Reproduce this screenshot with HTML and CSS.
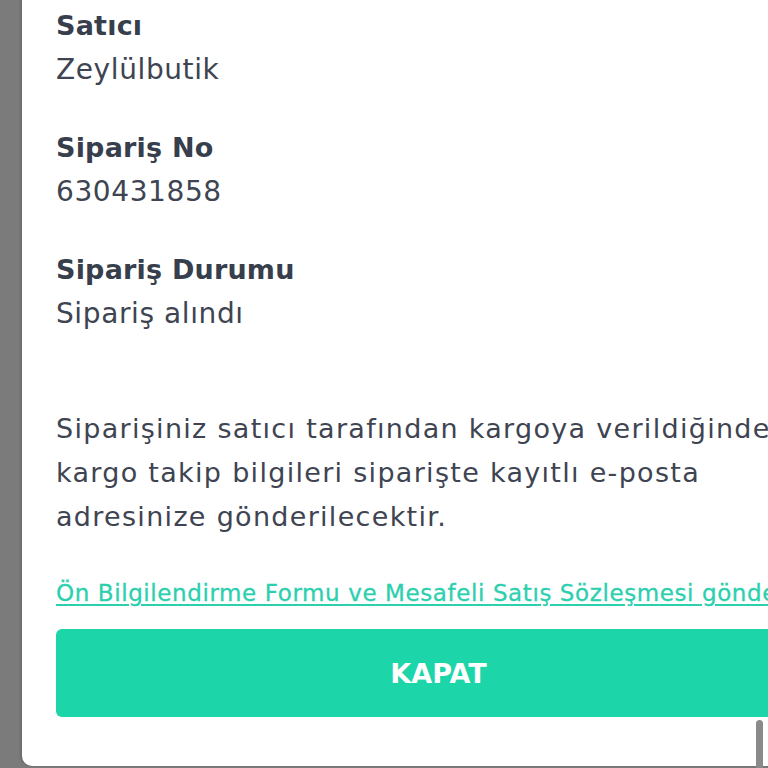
FILE: index.html
```html
<!DOCTYPE html>
<html lang="tr">
<head>
<meta charset="utf-8">
<title>Sipariş</title>
<link rel="stylesheet" href="styles.css">
</head>
<body>
<div class="panel">
  <div class="field">
    <div class="label">Satıcı</div>
    <div class="value">Zeylülbutik</div>
  </div>
  <div class="field">
    <div class="label">Sipariş No</div>
    <div class="value">630431858</div>
  </div>
  <div class="field">
    <div class="label">Sipariş Durumu</div>
    <div class="value">Sipariş alındı</div>
  </div>
  <p class="info">Siparişiniz satıcı tarafından kargoya verildiğinde kargo takip bilgileri siparişte kayıtlı e-posta adresinize gönderilecektir.</p>
  <a class="link" href="#">Ön Bilgilendirme Formu ve Mesafeli Satış Sözleşmesi gönderildi</a>
  <button class="close">KAPAT</button>
</div>
<div class="scroll-thumb"></div>
</body>
</html>
```
FILE: styles.css
```css
html, body {
  margin: 0;
  padding: 0;
  width: 768px;
  height: 768px;
  overflow: hidden;
}
body {
  background: #7b7b7b;
  font-family: "DejaVu Sans", "Open Sans", sans-serif;
  position: relative;
}
.panel {
  margin-left: 22px;
  width: 833px;
  height: 766px;
  box-sizing: border-box;
  padding: 0 34px;
  background: #ffffff;
  border-bottom-left-radius: 10px;
  box-shadow: -2px 0 2px rgba(0,0,0,0.12);
  display: flex;
  flex-direction: column;
}
.field {
  display: flex;
  flex-direction: column;
  margin-bottom: 34px;
}
.field:first-child {
  margin-top: 4px;
}
.label {
  font-size: 27px;
  line-height: 44px;
  font-weight: 700;
  letter-spacing: 0.2px;
  color: #373e4c;
  white-space: nowrap;
}
.value {
  font-size: 28px;
  line-height: 44px;
  font-weight: 400;
  letter-spacing: 0.6px;
  color: #3e4451;
  white-space: nowrap;
}
.info {
  margin: 37px 0 0 0;
  font-size: 27px;
  line-height: 44px;
  letter-spacing: 1.3px;
  color: #3e4451;
  width: 765px;
}
.link {
  margin-top: 39px;
  font-size: 23px;
  line-height: 30px;
  letter-spacing: 0.6px;
  color: #2ccfae;
  -webkit-text-stroke: 0.3px #2ccfae;
  text-decoration: underline;
  text-underline-offset: 3px;
  white-space: nowrap;
}
.close {
  margin-top: 21px;
  width: 765px;
  height: 88px;
  flex-shrink: 0;
  border: none;
  border-radius: 6px;
  background: #1cd5a9;
  color: #ffffff;
  font-family: "DejaVu Sans", "Open Sans", sans-serif;
  font-size: 27px;
  font-weight: 700;
  padding: 0;
}
.scroll-thumb {
  position: absolute;
  left: 756px;
  top: 720px;
  width: 7px;
  height: 60px;
  border-radius: 4px;
  background: #8a8a8a;
}
```
